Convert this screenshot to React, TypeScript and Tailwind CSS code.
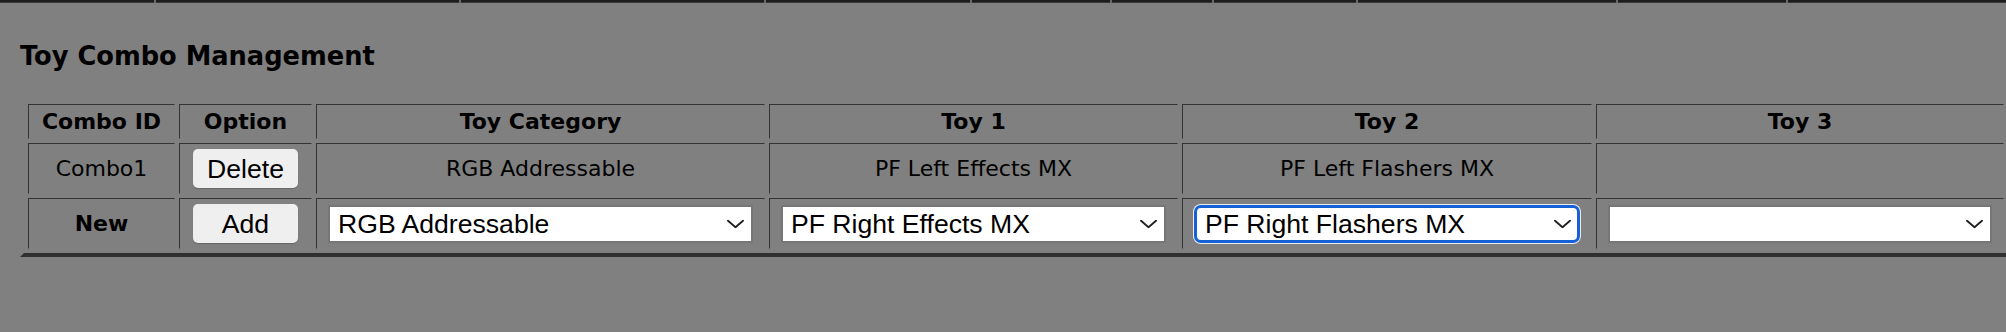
import React from "react";

const segs = [154, 303, 303, 204, 138, 100, 142, 258, 168];

function Chevron() {
  return (
    <svg
      className="absolute right-[9px] top-1/2 -translate-y-1/2 pointer-events-none"
      width="17"
      height="9"
      viewBox="0 0 17 9"
      fill="none"
    >
      <path d="M1 1.2 L8.5 7.8 L16 1.2" stroke="#1f1f1f" strokeWidth="1.8" strokeLinecap="round" strokeLinejoin="round" />
    </svg>
  );
}

function Select({ value, focused }: { value: string; focused?: boolean }) {
  return (
    <div className="relative w-full">
      <select
        defaultValue={value}
        className={
          "appearance-none block w-full h-[38px] bg-white pl-[8px] pr-[30px] text-[26.6px] leading-[30px] text-black font-['Liberation_Sans',Arial,sans-serif] outline-none " +
          (focused
            ? "border-[3px] border-[#1462d6] rounded-[7px] pl-[7px] shadow-[0_0_0_1px_rgba(255,255,255,0.85)]"
            : "border-2 border-[#767676] rounded-none")
        }
      >
        <option value={value}>{value}</option>
      </select>
      <Chevron />
    </div>
  );
}

function Btn({ label }: { label: string }) {
  return (
    <button className="w-[105px] h-[39px] bg-[#efefef] rounded-[5px] text-[26.6px] leading-[30px] text-black font-['Liberation_Sans',Arial,sans-serif] shadow-[0_1px_1px_rgba(0,0,0,0.2)]">
      {label}
    </button>
  );
}

const cell =
  "p-0 border border-t-[#333333] border-l-[#333333] border-r-transparent border-b-transparent text-center align-middle";

export default function App() {
  return (
    <div className="w-full h-[332px] bg-[#808080] overflow-hidden font-['DejaVu_Sans',Verdana,sans-serif] text-black">
      <div className="flex h-[3px] w-full">
        {segs.map((w, i) => (
          <React.Fragment key={i}>
            <div className="h-[3px] bg-[#1c1c1c] border-b border-b-[#3a3a3a]" style={{ width: w }} />
            <div className="h-[3px] w-[2px] bg-[#6a6a6a]" />
          </React.Fragment>
        ))}
        <div className="h-[3px] flex-1 bg-[#1c1c1c] border-b border-b-[#3a3a3a]" />
      </div>

      <h2 className="mt-[38px] ml-[20px] text-[25.7px] leading-[30px] font-bold">Toy Combo Management</h2>

      <table className="mt-[25px] ml-[20px] w-[1992px] table-fixed border-separate border-spacing-[4px] border-[4px] border-t-[#808080] border-l-[#808080] border-b-[#303030] border-r-[#303030] text-[22px]">
        <thead>
          <tr>
            <th className={cell + " w-[147px] h-[35px] font-bold leading-[26px]"}>Combo ID</th>
            <th className={cell + " w-[133px] h-[35px] font-bold leading-[26px]"}>Option</th>
            <th className={cell + " w-[449px] h-[35px] font-bold leading-[26px]"}>Toy Category</th>
            <th className={cell + " w-[409px] h-[35px] font-bold leading-[26px]"}>Toy 1</th>
            <th className={cell + " w-[410px] h-[35px] font-bold leading-[26px]"}>Toy 2</th>
            <th className={cell + " w-[408px] h-[35px] font-bold leading-[26px]"}>Toy 3</th>
          </tr>
        </thead>
        <tbody>
          <tr>
            <td className={cell + " h-[51px] leading-[26px]"}>Combo1</td>
            <td className={cell + " h-[51px]"}>
              <Btn label="Delete" />
            </td>
            <td className={cell + " h-[51px] leading-[26px]"}>RGB Addressable</td>
            <td className={cell + " h-[51px] leading-[26px]"}>PF Left Effects MX</td>
            <td className={cell + " h-[51px] leading-[26px]"}>PF Left Flashers MX</td>
            <td className={cell + " h-[51px]"}></td>
          </tr>
          <tr>
            <td className={cell + " h-[51px] font-bold leading-[26px]"}>New</td>
            <td className={cell + " h-[51px]"}>
              <Btn label="Add" />
            </td>
            <td className={cell + " h-[51px] px-[11px]"}>
              <Select value="RGB Addressable" />
            </td>
            <td className={cell + " h-[51px] px-[11px]"}>
              <Select value="PF Right Effects MX" />
            </td>
            <td className={cell + " h-[51px] px-[11px]"}>
              <Select value="PF Right Flashers MX" focused />
            </td>
            <td className={cell + " h-[51px] px-[11px]"}>
              <Select value="" />
            </td>
          </tr>
        </tbody>
      </table>
    </div>
  );
}
